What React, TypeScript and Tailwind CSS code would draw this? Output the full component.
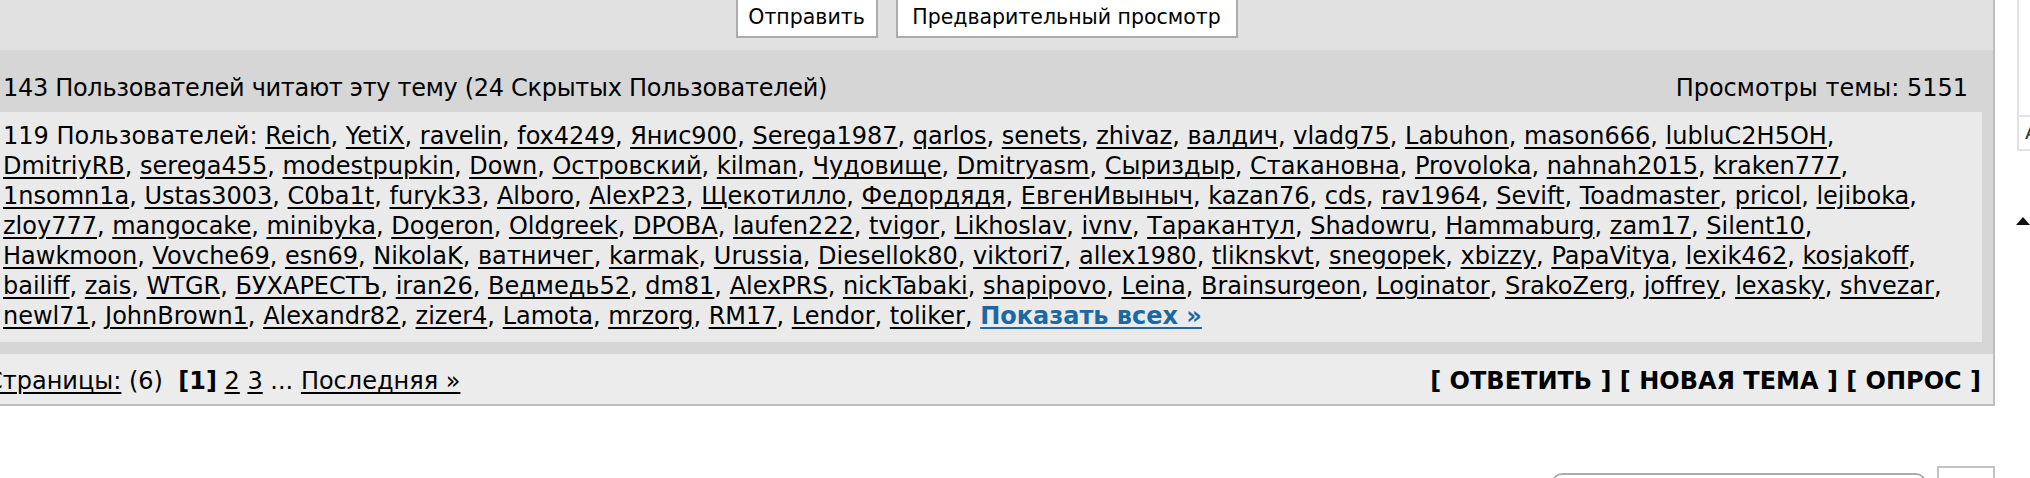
import React from "react";

const viewers: string[][] = [
  ["Reich", "YetiX", "ravelin", "fox4249", "Янис900", "Serega1987", "qarlos", "senets", "zhivaz", "валдич", "vladg75", "Labuhon", "mason666", "lubluC2H5OH"],
  ["DmitriyRB", "serega455", "modestpupkin", "Down", "Островский", "kilman", "Чудовище", "Dmitryasm", "Сыриздыр", "Стакановна", "Provoloka", "nahnah2015", "kraken777"],
  ["1nsomn1a", "Ustas3003", "C0ba1t", "furyk33", "Alboro", "AlexP23", "Щекотилло", "Федордядя", "ЕвгенИвыныч", "kazan76", "cds", "rav1964", "Sevift", "Toadmaster", "pricol", "lejiboka"],
  ["zloy777", "mangocake", "minibyka", "Dogeron", "Oldgreek", "DPOBA", "laufen222", "tvigor", "Likhoslav", "ivnv", "Таракантул", "Shadowru", "Hammaburg", "zam17", "Silent10"],
  ["Hawkmoon", "Vovche69", "esn69", "NikolaK", "ватничег", "karmak", "Urussia", "Diesellok80", "viktori7", "allex1980", "tliknskvt", "snegopek", "xbizzy", "PapaVitya", "lexik462", "kosjakoff"],
  ["bailiff", "zais", "WTGR", "БУХАРЕСТЪ", "iran26", "Ведмедь52", "dm81", "AlexPRS", "nickTabaki", "shapipovo", "Leina", "Brainsurgeon", "Loginator", "SrakoZerg", "joffrey", "lexasky", "shvezar"],
  ["newl71", "JohnBrown1", "Alexandr82", "zizer4", "Lamota", "mrzorg", "RM17", "Lendor", "toliker"],
];

function UserLink({ name }: { name: string }) {
  return (
    <a href="#" className="text-black underline decoration-2 underline-offset-[3px]">
      {name}
    </a>
  );
}

function ViewerList() {
  return (
    <div className="mx-[11px] bg-[#eaeaea] pt-[9px] pb-[11px] pl-[12px] leading-[30px]">
      {viewers.map((row, i) => (
        <div key={i} className="whitespace-nowrap">
          {i === 0 && "119 Пользователей: "}
          {row.map((name, j) => (
            <React.Fragment key={name}>
              <UserLink name={name} />
              {j < row.length - 1 ? ", " : ","}
            </React.Fragment>
          ))}
          {i === viewers.length - 1 && (
            <>
              {" "}
              <a href="#" className="font-bold text-[#1a69a4] underline decoration-2 underline-offset-[3px]">
                Показать всех »
              </a>
            </>
          )}
        </div>
      ))}
    </div>
  );
}

function TopicPanel() {
  return (
    <div className="-ml-[20px] w-[2015px] bg-[#d6d6d6] border-r-2 border-b-2 border-[#bdbdbd] text-black">
      {/* reply form buttons */}
      <div className="h-[50px] bg-[#e1e1e1] overflow-hidden flex items-end justify-center gap-[18px] pb-[12px]">
        <button className="w-[142px] h-[44px] bg-white border-2 border-[#acacac] text-[20.5px] leading-none pt-[2px]">
          Отправить
        </button>
        <button className="w-[342px] h-[44px] bg-white border-2 border-[#acacac] text-[20.5px] leading-none pt-[2px]">
          Предварительный просмотр
        </button>
      </div>

      <div className="h-[62px] flex justify-between pl-[23px] pr-[25px] pt-[23px] leading-[30px]">
        <span className="tracking-[-0.3px]">143 Пользователей читают эту тему (24 Скрытых Пользователей)</span>
        <span>Просмотры темы: 5151</span>
      </div>

      <ViewerList />

      <div className="mt-[12px] h-[50px] bg-[#ececec] flex justify-between pl-[6px] pr-[12px] pt-[12px] leading-[30px]">
        <div className="whitespace-nowrap">
          <a href="#" className="underline decoration-2 underline-offset-[3px]">Страницы:</a> (6)&nbsp;{" "}
          <b>[1]</b>{" "}
          <a href="#" className="underline decoration-2 underline-offset-[3px]">2</a>{" "}
          <a href="#" className="underline decoration-2 underline-offset-[3px]">3</a> ...{" "}
          <a href="#" className="underline decoration-2 underline-offset-[3px]">Последняя »</a>
        </div>
        <div className="font-bold whitespace-nowrap">[ ОТВЕТИТЬ ] [ НОВАЯ ТЕМА ] [ ОПРОС ]</div>
      </div>
    </div>
  );
}

export default function App() {
  return (
    <div
      className="w-[2030px] h-[478px] overflow-hidden bg-white flex text-[24px]"
      style={{ fontFamily: '"DejaVu Sans", Verdana, sans-serif' }}
    >
      <div className="w-[1995px] shrink-0 flex flex-col">
        <TopicPanel />
        <div className="flex justify-end items-start gap-[11px]">
          <div className="mt-[67px] w-[374px] h-[40px] rounded-[10px] border-2 border-[#acacac]" />
          <div className="mt-[60px] w-[58px] h-[40px] border-2 border-[#c3c3c3]" />
        </div>
      </div>

      {/* side column */}
      <div className="flex-1 pl-[22px] flex flex-col">
        <div className="h-[151px] border-l-2 border-b-2 border-[#e2e2e2] flex flex-col">
          <div className="h-[117px] border-b-2 border-[#e2e2e2]" />
          <div className="pl-[6px] text-[20px] leading-[30px] text-[#333]">А</div>
        </div>
        <svg className="mt-[66px] -ml-[1px]" width="14" height="8" viewBox="0 0 14 8">
          <polygon points="7,0 14,8 0,8" fill="#111" />
        </svg>
      </div>
    </div>
  );
}
